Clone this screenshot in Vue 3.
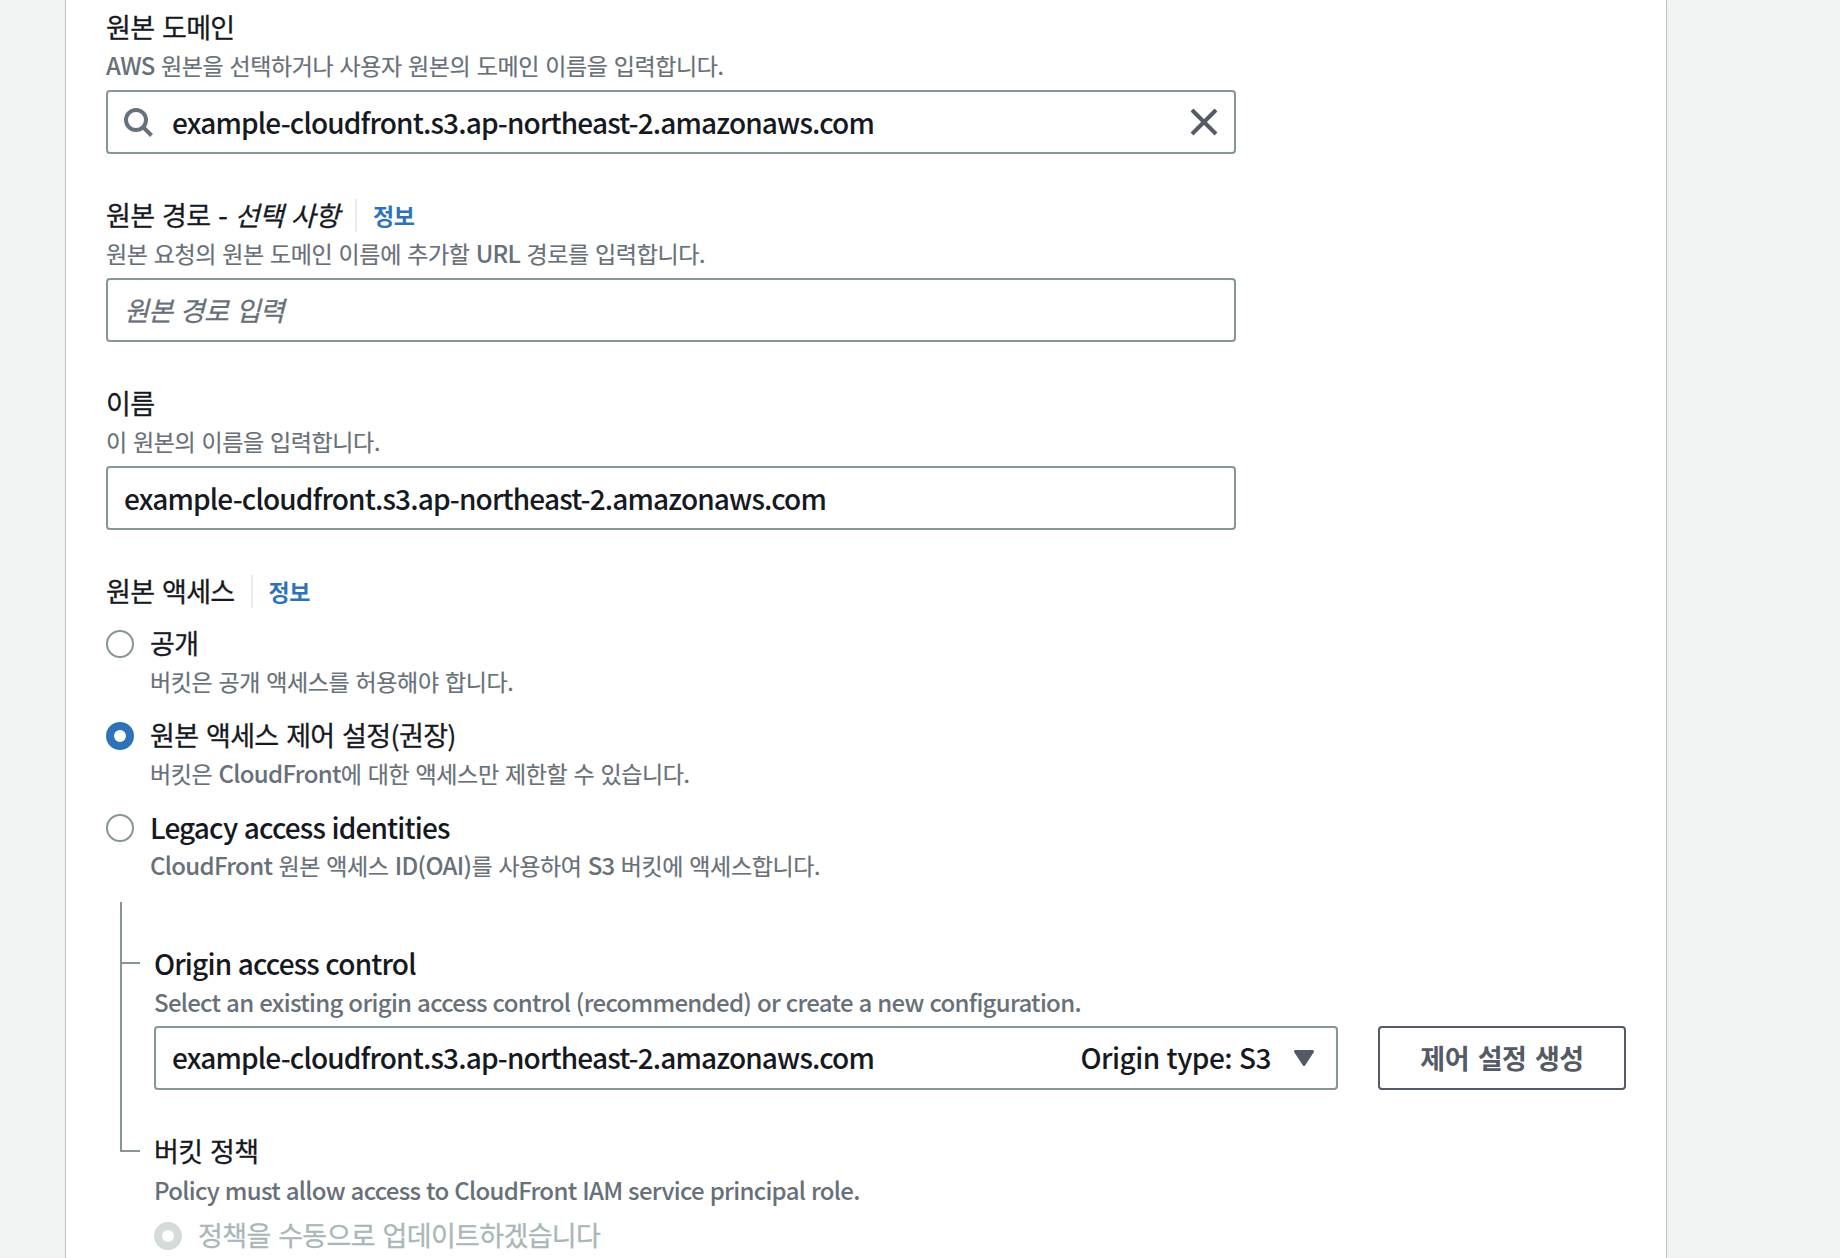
<template>
  <div class="page">
    <main class="panel">
      <section class="field">
        <div class="label">원본 도메인</div>
        <div class="hint"><span class="latin">AWS</span> 원본을 선택하거나 사용자 원본의 도메인 이름을 입력합니다.</div>
        <div class="control">
          <svg class="search" viewBox="0 0 32 32" width="32" height="32">
            <circle cx="12" cy="14" r="10" />
            <path d="M19 21L27.5 29.5" />
          </svg>
          <input v-model="domain" class="latin" />
          <svg class="close" viewBox="0 0 32 32" width="32" height="32" @click="domain = ''">
            <path d="M6 4L30 28M30 4L6 28" />
          </svg>
        </div>
      </section>

      <section class="field">
        <div class="label">
          <span>원본 경로 <span class="latin">-</span> <i>선택 사항</i></span>
          <a class="info">정보</a>
        </div>
        <div class="hint">원본 요청의 원본 도메인 이름에 추가할 <span class="latin">URL</span> 경로를 입력합니다.</div>
        <div class="control">
          <input v-model="path" class="path" placeholder="원본 경로 입력" />
        </div>
      </section>

      <section class="field">
        <div class="label">이름</div>
        <div class="hint">이 원본의 이름을 입력합니다.</div>
        <div class="control">
          <input v-model="name" class="latin" />
        </div>
      </section>

      <section class="access">
        <div class="label">
          <span>원본 액세스</span>
          <a class="info">정보</a>
        </div>
        <label v-for="option in options" :key="option.value" class="option">
          <input v-model="access" type="radio" name="access" :value="option.value" />
          <span>
            <span class="label" :class="{ latin: option.latin }">{{ option.label }}</span>
            <span class="hint"><span v-for="(part, i) in split(option.hint)" :key="i" :class="{ latin: i % 2 }">{{ part }}</span></span>
          </span>
        </label>
      </section>

      <div class="tree">
        <section class="branch">
          <div class="label latin">Origin access control</div>
          <div class="hint latin">Select an existing origin access control (recommended) or create a new configuration.</div>
          <div class="row">
            <div class="control select latin">
              <span>{{ name }}</span>
              <span class="type">Origin type: S3</span>
              <svg class="caret" viewBox="0 0 20 16" width="20" height="16">
                <path d="M1.5 1.5H18.5L10 14.5Z" />
              </svg>
            </div>
            <button class="btn">제어 설정 생성</button>
          </div>
        </section>
        <section class="branch last">
          <div class="label">버킷 정책</div>
          <div class="hint latin">Policy must allow access to CloudFront IAM service principal role.</div>
          <label class="option disabled">
            <input type="radio" name="policy" checked disabled />
            <span class="label">정책을 수동으로 업데이트하겠습니다</span>
          </label>
        </section>
      </div>
    </main>
  </div>
</template>

<script setup>
import { ref } from 'vue'

const domain = ref('example-cloudfront.s3.ap-northeast-2.amazonaws.com')
const path = ref('')
const name = ref('example-cloudfront.s3.ap-northeast-2.amazonaws.com')
const access = ref('oac')

const options = [
  { value: 'public', label: '공개', hint: '버킷은 공개 액세스를 허용해야 합니다.' },
  { value: 'oac', label: '원본 액세스 제어 설정(권장)', hint: '버킷은 CloudFront에 대한 액세스만 제한할 수 있습니다.' },
  {
    value: 'oai',
    label: 'Legacy access identities',
    hint: 'CloudFront 원본 액세스 ID(OAI)를 사용하여 S3 버킷에 액세스합니다.',
    latin: true
  }
]

// odd parts are latin words, even parts are hangul
const split = (text) => text.split(/([A-Za-z0-9()]+)/)
</script>

<style>
body {
  margin: 0;
  background: #f2f3f3;
}
</style>

<style scoped>
.page {
  height: 1258px;
  overflow: hidden;
  padding: 0 174px 0 66px;
  box-sizing: border-box;
  background: #f2f3f3;
  color: #16191f;
  font-family: "Noto Sans CJK KR", sans-serif;
  font-size: 28px;
}

.panel {
  height: 1258px;
  box-sizing: border-box;
  padding: 6px 40px 0 40px;
  background: #fff;
  box-shadow: 0 0 0 1px #bfc4c6, 0 0 3px #d5dbdb;
}

.field {
  width: 1130px;
  margin-bottom: 40px;
}

.label {
  display: flex;
  align-items: center;
  height: 44px;
  box-sizing: border-box;
  padding-bottom: 2px;
  line-height: 42px;
  font-size: 27px;
  white-space: nowrap;
  letter-spacing: -0.65px;
  word-spacing: 2.2px;
  -webkit-text-stroke: 0.3px;
}

.hint {
  display: block;
  height: 32px;
  line-height: 30px;
  margin-bottom: 8px;
  font-size: 23px;
  color: #687078;
  white-space: pre;
  letter-spacing: -0.4px;
  word-spacing: 1.5px;
  -webkit-text-stroke: 0.2px;
}

.latin {
  font-size: 28px;
  font-weight: 500;
  letter-spacing: -0.85px;
  word-spacing: 1px;
  -webkit-text-stroke: 0;
}

.label .latin {
  line-height: 1;
}

.hint .latin,
.hint.latin {
  font-size: 24px;
  letter-spacing: -0.7px;
}

.hint.latin {
  line-height: 32px;
}

.info {
  height: 33px;
  line-height: 33px;
  margin-left: 16px;
  padding-left: 16px;
  border-left: 2px solid #eaeded;
  font-size: 23px;
  font-weight: 700;
  letter-spacing: -0.4px;
  color: #2e73b8;
  -webkit-text-stroke: 0;
}

.control {
  display: flex;
  align-items: center;
  height: 64px;
  box-sizing: border-box;
  padding: 0 16px;
  border: 2px solid #879596;
  border-radius: 4px;
}

.control input {
  flex: 1;
  min-width: 0;
  height: 44px;
  padding: 0;
  border: 0;
  outline: 0;
  background: none;
  color: inherit;
  font-family: inherit;
  font-size: 28px;
}

.control .path {
  box-sizing: border-box;
  padding-bottom: 2px;
}

.control input::placeholder {
  color: #687078;
  font-size: 27px;
  font-style: italic;
  letter-spacing: -0.7px;
  word-spacing: 2.2px;
  -webkit-text-stroke: 0.3px;
}

.search {
  margin-right: 16px;
  fill: none;
  stroke: #687078;
  stroke-width: 4;
}

.close {
  fill: none;
  stroke: #545b64;
  stroke-width: 4;
}

.option {
  display: flex;
  height: 84px;
  margin-top: 8px;
}

.option input {
  appearance: none;
  flex: none;
  width: 28px;
  height: 28px;
  margin: 8px 16px 0 0;
  box-sizing: border-box;
  border: 2px solid #879596;
  border-radius: 50%;
  background: #fff;
}

.option input:checked {
  border: 8px solid #2e73b8;
}

.option input:disabled {
  border-color: #d5dbdb;
}

.disabled {
  color: #aab7b8;
}

/* vertical guide line, each branch draws its own horizontal tick */
.tree {
  position: relative;
  margin: 12px 0 0 14px;
  padding: 40px 0 0 34px;
}

.tree::before {
  content: "";
  position: absolute;
  left: 0;
  top: 0;
  width: 2px;
  height: 250px;
  background: #879596;
}

.branch {
  position: relative;
  margin-bottom: 40px;
}

.branch::before {
  content: "";
  position: absolute;
  left: -34px;
  top: 20px;
  width: 20px;
  height: 2px;
  background: #879596;
}

.row {
  display: flex;
  gap: 40px;
}

.select {
  flex: 1;
}

.select span {
  padding-bottom: 2px;
}

.select .type {
  margin-left: auto;
  letter-spacing: -0.5px;
}

.caret {
  margin-left: 23px;
  margin-right: 6px;
  fill: #545b64;
  stroke: #545b64;
  stroke-width: 3;
  stroke-linejoin: round;
}

.btn {
  width: 248px;
  height: 64px;
  padding: 0 0 2px;
  border: 2px solid #545b64;
  border-radius: 4px;
  background: #fff;
  color: #545b64;
  font-family: inherit;
  font-size: 27px;
  font-weight: 700;
  letter-spacing: -0.5px;
  word-spacing: 3px;
}
</style>
